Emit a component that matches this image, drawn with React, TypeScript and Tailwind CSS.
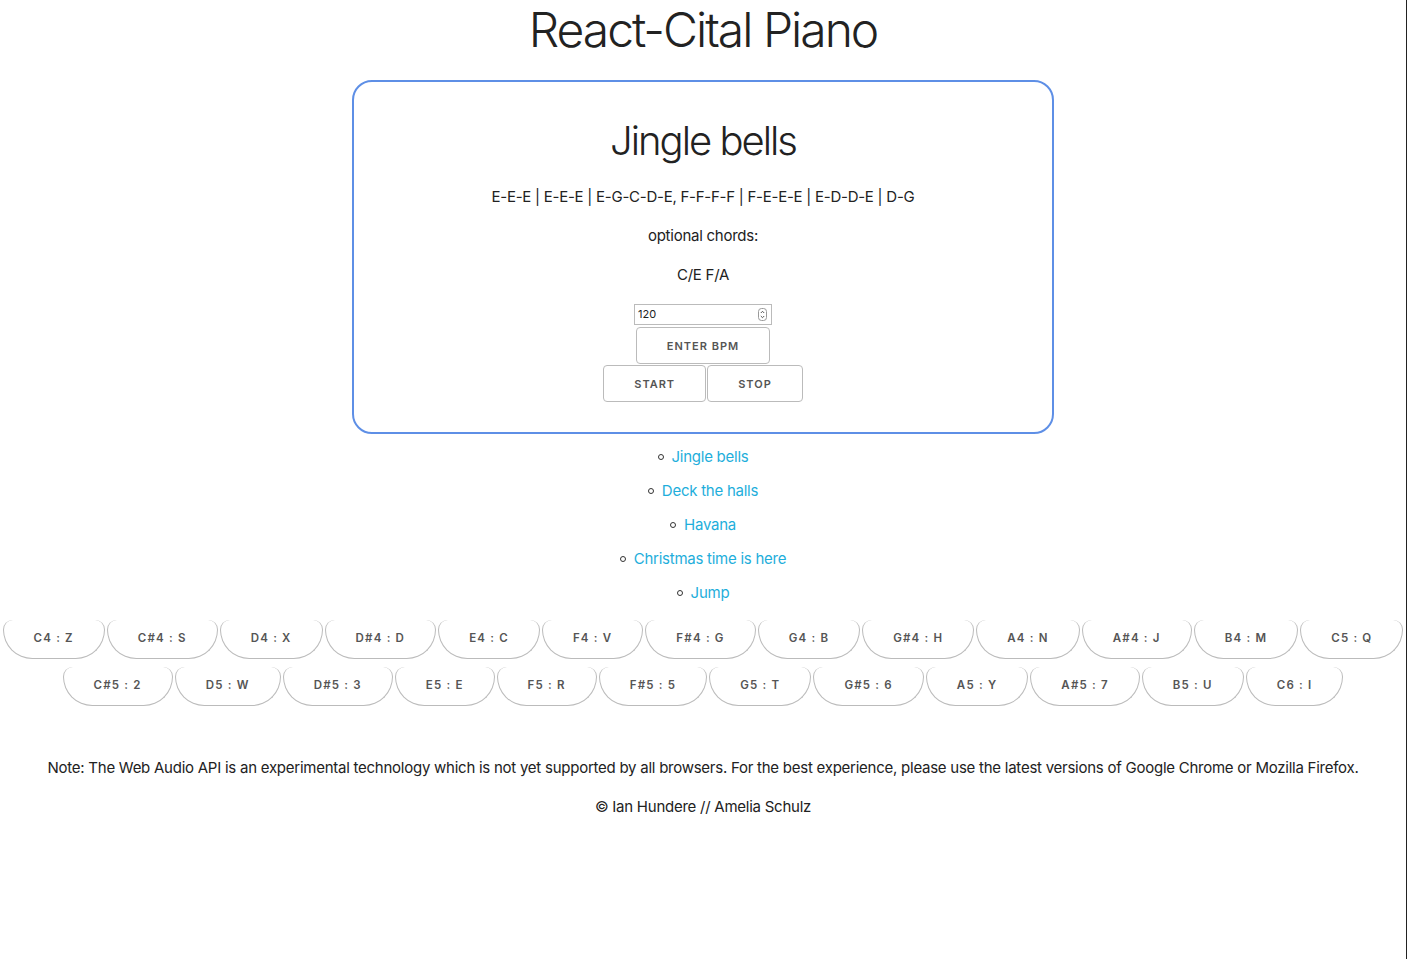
import { useState } from 'react';

const row1 = ['C4 : Z', 'C#4 : S', 'D4 : X', 'D#4 : D', 'E4 : C', 'F4 : V', 'F#4 : G', 'G4 : B', 'G#4 : H', 'A4 : N', 'A#4 : J', 'B4 : M', 'C5 : Q'];
const row2 = ['C#5 : 2', 'D5 : W', 'D#5 : 3', 'E5 : E', 'F5 : R', 'F#5 : 5', 'G5 : T', 'G#5 : 6', 'A5 : Y', 'A#5 : 7', 'B5 : U', 'C6 : I'];
const songs = ['Jingle bells', 'Deck the halls', 'Havana', 'Christmas time is here', 'Jump'];

const btn =
  'h-[37px] px-[30px] bg-white border border-[#bbb] rounded-[4px] text-[11px] font-semibold tracking-[1px] uppercase text-[#555] leading-[37px] whitespace-nowrap';

function Key({ label }: { label: string }) {
  return (
    <button className="h-[39px] px-[30px] bg-white border border-t-0 border-[#bbb] rounded-[10px_10px_30px_30px] text-[11.5px] font-semibold tracking-[1.2px] text-[#555] whitespace-nowrap">
      {label}
    </button>
  );
}

export default function App() {
  const [bpm, setBpm] = useState('120');

  return (
    <div className="min-h-screen flex bg-white text-[#222] font-['Inter','Liberation_Sans',sans-serif]">
      <div className="flex-1 min-w-0 flex flex-col items-center">
        <h1 className="text-[48px] leading-[60px] font-light tracking-[-2px] text-[#222]">React-Cital Piano</h1>

        {/* Song card */}
        <div className="mt-[20px] w-[702px] border-2 border-[#5e8fe6] rounded-[20px] pt-[34px] pb-[30px] flex flex-col items-center">
          <h2 className="text-[40px] leading-[50px] font-light tracking-[-2px]">Jingle bells</h2>
          <div className="mt-[19px] text-[15px] leading-[24px] tracking-[-0.25px] flex flex-col items-center gap-[15px]">
            <p>E-E-E | E-E-E | E-G-C-D-E, F-F-F-F | F-E-E-E | E-D-D-E | D-G</p>
            <p>optional chords:</p>
            <p>C/E F/A</p>
          </div>

          <div className="mt-[17px] w-[138px] h-[21px] flex items-center border border-[#bbb] bg-white pl-[3px] pr-[4px]">
            <input
              value={bpm}
              onChange={(e) => setBpm(e.target.value)}
              className="flex-1 min-w-0 text-[11px] outline-none bg-transparent"
            />
            <svg width="9" height="13" viewBox="0 0 9 13" className="shrink-0">
              <rect x="0.5" y="0.5" width="8" height="12" rx="3" fill="#fff" stroke="#999" />
              <path d="M2.8 5 L4.5 3.3 L6.2 5" fill="none" stroke="#444" strokeWidth="0.9" />
              <path d="M2.8 8 L4.5 9.7 L6.2 8" fill="none" stroke="#444" strokeWidth="0.9" />
            </svg>
          </div>
          <button className={`mt-[2px] ${btn}`}>Enter BPM</button>
          <div className="mt-px flex gap-px">
            <button className={btn}>Start</button>
            <button className={btn}>Stop</button>
          </div>
        </div>

        {/* Song list */}
        <ul className="mt-[11px] text-center text-[15px] leading-[24px] tracking-[-0.25px]">
          {songs.map((s) => (
            <li key={s} className="mb-[10px] flex items-center justify-center gap-[8px]">
              <span className="w-[6px] h-[6px] rounded-full border border-[#333]" />
              <a href="#" className="text-[#1eaedb]">{s}</a>
            </li>
          ))}
        </ul>

        {/* Keyboard */}
        <div className="mt-[5px] flex justify-center gap-[2px]">
          {row1.map((k) => (
            <Key key={k} label={k} />
          ))}
        </div>
        <div className="mt-[8px] flex justify-center gap-[2px]">
          {row2.map((k) => (
            <Key key={k} label={k} />
          ))}
        </div>

        <div className="mt-[50px] text-[15px] leading-[24px] tracking-[-0.25px] flex flex-col items-center gap-[15px]">
          <p>
            Note: The Web Audio API is an experimental technology which is not yet supported by all browsers. For the best experience, please use the latest versions of Google Chrome or Mozilla Firefox.
          </p>
          <p>© Ian Hundere // Amelia Schulz</p>
        </div>
      </div>
      <div className="w-px bg-[#222]" />
    </div>
  );
}
